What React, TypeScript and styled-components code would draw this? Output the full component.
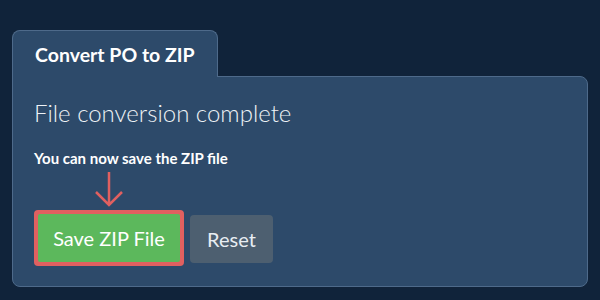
import React from 'react';
import styled, { createGlobalStyle } from 'styled-components';

const GlobalStyle = createGlobalStyle`
  html, body {
    margin: 0;
    padding: 0;
    background: #10233a;
  }
  body {
    font-family: Lato, "Open Sans", sans-serif;
  }
`;

const Page = styled.div`
  width: 600px;
  height: 300px;
  box-sizing: border-box;
  padding: 30px 12px 0 12px;
`;

const Tab = styled.div`
  position: relative;
  z-index: 1;
  box-sizing: border-box;
  width: 206px;
  height: 47px;
  margin-bottom: -1px;
  padding: 12px 0 0 22px;
  background: #2d4a6a;
  border: 1px solid #4e6a8a;
  border-bottom: none;
  border-radius: 8px 8px 0 0;
  color: #ffffff;
  font-size: 19.5px;
  font-weight: 700;
  line-height: 24px;
  white-space: nowrap;
`;

const Panel = styled.div`
  box-sizing: border-box;
  width: 576px;
  height: 211px;
  padding: 21px 21px;
  background: #2d4a6a;
  border: 1px solid #4e6a8a;
  border-radius: 0 8px 8px 8px;
`;

const Heading = styled.h2`
  margin: 0;
  color: #eef2f6;
  font-size: 24px;
  font-weight: 300;
  line-height: 29px;
`;

const Note = styled.p`
  margin: 22px 0 0 0;
  color: #ffffff;
  font-size: 15px;
  font-weight: 700;
  line-height: 18px;
`;

const Actions = styled.div`
  display: flex;
  align-items: flex-start;
  gap: 6px;
  margin-top: 4px;
`;

const Highlight = styled.div`
  display: flex;
  flex-direction: column;
  align-items: center;
`;

const Arrow = styled.svg`
  display: block;
  margin-bottom: 3px;
`;

const Outline = styled.div`
  padding: 4px;
  background: #e06060;
  border-radius: 4px;
`;

const Button = styled.button<{ $variant: 'primary' | 'muted' }>`
  box-sizing: border-box;
  width: ${p => (p.$variant === 'primary' ? '142px' : '83px')};
  height: 48px;
  padding: 0;
  border: none;
  border-radius: ${p => (p.$variant === 'primary' ? '2px' : '4px')};
  background: ${p => (p.$variant === 'primary' ? '#5cb85c' : '#4d5f70')};
  color: ${p => (p.$variant === 'primary' ? '#ffffff' : '#e8edf2')};
  font-family: Lato, "Open Sans", sans-serif;
  font-size: 20px;
  font-weight: 400;
  cursor: pointer;
`;

const ResetWrap = styled.div`
  padding-top: 44px;
`;

export default function App() {
  return (
    <>
      <GlobalStyle />
      <Page>
        <Tab>Convert PO to ZIP</Tab>
        <Panel>
          <Heading>File conversion complete</Heading>
          <Note>You can now save the ZIP file</Note>
          <Actions>
            <Highlight>
              <Arrow width="30" height="36" viewBox="0 0 30 36">
                <path
                  d="M15 1 V34 M2 21 L15 34 L28 21"
                  fill="none"
                  stroke="#e06060"
                  strokeWidth="2.5"
                />
              </Arrow>
              <Outline>
                <Button $variant="primary">Save ZIP File</Button>
              </Outline>
            </Highlight>
            <ResetWrap>
              <Button $variant="muted">Reset</Button>
            </ResetWrap>
          </Actions>
        </Panel>
      </Page>
    </>
  );
}
